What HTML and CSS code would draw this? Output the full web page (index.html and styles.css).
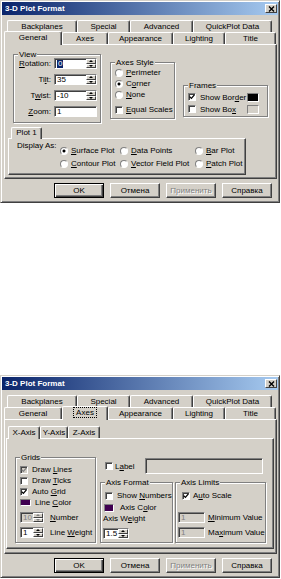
FILE: index.html
```html
<!DOCTYPE html>
<html lang="ru">
<head>
  <meta charset="UTF-8">
  <title>3-D Plot Format</title>
  <link rel="stylesheet" href="styles.css">
</head>
<body>
  <!-- dialog 1: General tab -->
  <div class="dlg">
    <div class="titlebar">
      <span class="title">3-D Plot Format</span>
      <span class="close"><svg width="7" height="6" viewBox="0 0 7 6"><path d="M1 0.5l5 5M6 0.5l-5 5" stroke="#000" stroke-width="1.4"/></svg></span>
    </div>
    <div class="tabs">
      <div class="tabrow back">
        <div class="tab t-back">Backplanes</div>
        <div class="tab t-special">Special</div>
        <div class="tab t-adv">Advanced</div>
        <div class="tab t-quick">QuickPlot Data</div>
      </div>
      <div class="tabrow front">
        <div class="tab t-general sel">General</div>
        <div class="tab t-axes">Axes</div>
        <div class="tab t-appear">Appearance</div>
        <div class="tab t-light">Lighting</div>
        <div class="tab t-title">Title</div>
      </div>
    </div>
    <div class="panel">
      <div class="gen-top">
        <div class="group g-view">
          <div class="glabel">View</div>
          <div class="view-grid">
            <span class="lbl"><u>R</u>otation:</span>
            <div class="field"><span class="selval">0</span><span class="spin"><i class="up"></i><i class="dn"></i></span></div>
            <span class="lbl">Ti<u>l</u>t:</span>
            <div class="field"><span class="val">35</span><span class="spin"><i class="up"></i><i class="dn"></i></span></div>
            <span class="lbl">T<u>w</u>ist:</span>
            <div class="field"><span class="val">-10</span><span class="spin"><i class="up"></i><i class="dn"></i></span></div>
            <span class="lbl"><u>Z</u>oom:</span>
            <div class="field"><span class="val">1</span></div>
          </div>
        </div>
        <div class="group g-axstyle">
          <div class="glabel">Axes Style</div>
          <div class="opts">
            <div class="row"><span class="rb"></span><span class="txt r-txt"><u>P</u>erimeter</span></div>
            <div class="row"><span class="rb on"></span><span class="txt r-txt">C<u>o</u>rner</span></div>
            <div class="row"><span class="rb"></span><span class="txt r-txt"><u>N</u>one</span></div>
            <div class="row eq"><span class="cb"></span><span class="txt r-txt"><u>E</u>qual Scales</span></div>
          </div>
        </div>
        <div class="group g-frames">
          <div class="glabel">Frames</div>
          <div class="frow">
            <span class="cb"><svg width="6" height="6" viewBox="0 0 6 6"><path d="M0.6 2.6l1.8 1.8 3-3.6" stroke="#000" stroke-width="1.3" fill="none"/></svg></span>
            <span class="txt">Show Bor<u>d</u>er</span>
            <span class="sw black"></span>
          </div>
          <div class="frow">
            <span class="cb"></span>
            <span class="txt">Show Bo<u>x</u></span>
            <span class="sw grey"></span>
          </div>
        </div>
      </div>
      <div class="tabrow plot-tabs">
        <div class="tab t-plot1 sel">Plot 1</div>
      </div>
      <div class="subpanel plot-panel">
        <span class="disp-lbl">Display As:</span>
        <div class="disp-grid">
          <div class="row"><span class="rb on"></span><span class="txt r-txt"><u>S</u>urface Plot</span></div>
          <div class="row"><span class="rb"></span><span class="txt r-txt"><u>D</u>ata Points</span></div>
          <div class="row"><span class="rb"></span><span class="txt r-txt"><u>B</u>ar Plot</span></div>
          <div class="row"><span class="rb"></span><span class="txt r-txt"><u>C</u>ontour Plot</span></div>
          <div class="row"><span class="rb"></span><span class="txt r-txt"><u>V</u>ector Field Plot</span></div>
          <div class="row"><span class="rb"></span><span class="txt r-txt"><u>P</u>atch Plot</span></div>
        </div>
      </div>
    </div>
    <div class="buttons">
      <div class="btn def">OK</div>
      <div class="btn">Отмена</div>
      <div class="btn dis">Применить</div>
      <div class="btn">Справка</div>
    </div>
  </div>

  <!-- dialog 2: Axes tab -->
  <div class="dlg">
    <div class="titlebar">
      <span class="title">3-D Plot Format</span>
      <span class="close"><svg width="7" height="6" viewBox="0 0 7 6"><path d="M1 0.5l5 5M6 0.5l-5 5" stroke="#000" stroke-width="1.4"/></svg></span>
    </div>
    <div class="tabs">
      <div class="tabrow back">
        <div class="tab t-back">Backplanes</div>
        <div class="tab t-special">Special</div>
        <div class="tab t-adv">Advanced</div>
        <div class="tab t-quick">QuickPlot Data</div>
      </div>
      <div class="tabrow front">
        <div class="tab t-general">General</div>
        <div class="tab t-axes sel"><span class="focus">Axes</span></div>
        <div class="tab t-appear">Appearance</div>
        <div class="tab t-light">Lighting</div>
        <div class="tab t-title">Title</div>
      </div>
    </div>
    <div class="panel">
      <div class="tabrow axis-tabs">
        <div class="tab t-x sel">X-Axis</div>
        <div class="tab t-y">Y-Axis</div>
        <div class="tab t-z">Z-Axis</div>
      </div>
      <div class="subpanel axis-panel">
        <div class="group g-grids">
          <div class="glabel">Grids</div>
          <div class="grid-rows">
            <div class="row"><span class="cb dis"><svg width="6" height="6" viewBox="0 0 6 6"><path d="M0.6 2.6l1.8 1.8 3-3.6" stroke="#808080" stroke-width="1.3" fill="none"/></svg></span><span class="txt c-txt">Draw <u>L</u>ines</span></div>
            <div class="row"><span class="cb"></span><span class="txt c-txt">Draw <u>T</u>icks</span></div>
            <div class="row"><span class="cb"><svg width="6" height="6" viewBox="0 0 6 6"><path d="M0.6 2.6l1.8 1.8 3-3.6" stroke="#000" stroke-width="1.3" fill="none"/></svg></span><span class="txt c-txt">Auto <u>G</u>rid</span></div>
            <div class="row"><span class="sw purple lc"></span><span class="txt">Line <u>C</u>olor</span></div>
            <div class="row inrow"><div class="field dis w-num"><span class="val">10</span><span class="spin"><i class="up"></i><i class="dn"></i></span></div><span class="txt f-txt"><u>N</u>umber</span></div>
            <div class="row inrow"><div class="field w-num"><span class="val">1</span><span class="spin"><i class="up"></i><i class="dn"></i></span></div><span class="txt f-txt">Line <u>W</u>eight</span></div>
          </div>
        </div>
        <div class="axis-right">
          <div class="lblrow">
            <span class="cb"></span>
            <span class="txt lbl-txt">L<u>a</u>bel</span>
            <span class="textbox"></span>
          </div>
          <div class="axis-groups">
            <div class="group g-axfmt">
              <div class="glabel">Axis Format</div>
              <div class="row fmt-show"><span class="cb"></span><span class="txt c-txt">Show <u>N</u>umbers</span></div>
              <div class="row fmt-color"><span class="sw purple ac"></span><span class="txt">Axis C<u>o</u>lor</span></div>
              <div class="row fmt-wlbl"><span class="txt">Axis W<u>e</u>ight</span></div>
              <div class="row fmt-win"><div class="field w-wt"><span class="val">1.5</span><span class="spin"><i class="up"></i><i class="dn"></i></span></div></div>
            </div>
            <div class="group g-axlim">
              <div class="glabel">Axis Limits</div>
              <div class="row lim-auto"><span class="cb"><svg width="6" height="6" viewBox="0 0 6 6"><path d="M0.6 2.6l1.8 1.8 3-3.6" stroke="#000" stroke-width="1.3" fill="none"/></svg></span><span class="txt">A<u>u</u>to Scale</span></div>
              <div class="row lim-min"><div class="field dis w-lim"><span class="val">1</span></div><span class="txt l-txt"><u>M</u>inimum Value</span></div>
              <div class="row lim-max"><div class="field dis w-lim"><span class="val">1</span></div><span class="txt l-txt">Ma<u>x</u>imum Value</span></div>
            </div>
          </div>
        </div>
      </div>
    </div>
    <div class="buttons">
      <div class="btn def">OK</div>
      <div class="btn">Отмена</div>
      <div class="btn dis">Применить</div>
      <div class="btn">Справка</div>
    </div>
  </div>
</body>
</html>
```

FILE: styles.css
```css
body {
  margin: 0;
  background: #fff;
  font-family: "Liberation Sans", Arial, sans-serif;
  font-size: 8px;
  color: #000;
}

u {
  text-decoration: underline;
  text-underline-offset: 1px;
}

/* window frame */
.dlg {
  width: 280px;
  height: 203px;
  box-sizing: border-box;
  padding: 1px;
  background: #d4d0c8;
  border: 1px solid;
  border-color: #d4d0c8 #404040 #404040 #d4d0c8;
  box-shadow: inset 1px 1px #fff, inset -1px -1px #808080;
}

.dlg + .dlg {
  margin-top: 172px;
}

.titlebar {
  height: 13px;
  display: flex;
  align-items: center;
  justify-content: space-between;
  padding: 0 1px 0 3px;
  background: linear-gradient(to right, #0a246a, #a6caf0);
}

.title {
  color: #fff;
  font-weight: bold;
  font-size: 8px;
}

.close {
  width: 12px;
  height: 9px;
  box-sizing: border-box;
  display: flex;
  align-items: center;
  justify-content: center;
  background: #d4d0c8;
  border: 1px solid;
  border-color: #fff #404040 #404040 #fff;
}

/* tabs */
.tabs {
  margin-top: 5px;
}

.tabrow {
  display: flex;
  align-items: flex-end;
  height: 12px;
}

.tabrow.back { margin-left: 5px; }
.tabrow.front { margin-left: 2px; }

.tab {
  height: 12px;
  box-sizing: border-box;
  line-height: 11px;
  text-align: center;
  border-top: 1px solid #fff;
  border-left: 1px solid #fff;
  border-right: 1px solid #404040;
  box-shadow: inset -1px 0 #808080;
  border-radius: 2px 2px 0 0;
  background: #d4d0c8;
}

.tab.sel {
  height: 14px;
  margin-bottom: -1px;
  position: relative;
  z-index: 1;
  line-height: 12px;
}

.focus {
  outline: 1px dotted #000;
  padding: 0 2px;
}

.t-back { width: 70px; }
.t-special { width: 53px; }
.t-adv { width: 63px; }
.t-quick { width: 79px; }
.t-general { width: 58px; }
.t-axes { width: 46px; }
.t-appear { width: 65px; }
.t-light { width: 52px; }
.t-title { width: 51px; }
.t-plot1 { width: 31px; }
.t-x { width: 32px; }
.t-y { width: 28px; }
.t-z { width: 32px; }

.panel {
  margin-left: 2px;
  width: 273px;
  height: 135px;
  box-sizing: border-box;
  border: 1px solid;
  border-color: #fff #404040 #404040 #fff;
  box-shadow: inset -1px -1px #808080;
}

.subpanel {
  box-sizing: border-box;
  border: 1px solid;
  border-color: #fff #404040 #404040 #fff;
  box-shadow: inset -1px -1px #808080;
}

/* group boxes */
.group {
  box-sizing: border-box;
  border: 1px solid #808080;
  box-shadow: inset 1px 1px #fff, 1px 1px #fff;
}

.glabel {
  width: fit-content;
  height: 9px;
  line-height: 9px;
  margin: -5px 0 0 4px;
  padding: 0 1px;
  background: #d4d0c8;
}

/* controls */
.row {
  display: flex;
  align-items: center;
  height: 11px;
}

.txt {
  white-space: nowrap;
}

.cb {
  width: 8px;
  height: 8px;
  flex: none;
  box-sizing: border-box;
  display: flex;
  align-items: center;
  justify-content: center;
  background: #fff;
  border: 1px solid;
  border-color: #808080 #fff #fff #808080;
  box-shadow: inset 1px 1px #404040;
}

.cb.dis {
  background: #d4d0c8;
}

.rb {
  width: 8px;
  height: 8px;
  flex: none;
  box-sizing: border-box;
  border-radius: 50%;
  background: #fff;
  border: 1px solid;
  border-color: #808080 #fff #fff #808080;
}

.rb.on {
  background: radial-gradient(circle, #000 1.2px, #fff 1.8px);
}

.r-txt { margin-left: 3px; }
.c-txt { margin-left: 4px; }

.sw {
  flex: none;
  box-sizing: border-box;
  border: 1px solid;
  border-color: #808080 #fff #fff #808080;
}

.sw.black { background: #000; }
.sw.grey { background: #d4d0c8; }
.sw.purple { background: #400050; }

.field {
  height: 11px;
  box-sizing: border-box;
  display: flex;
  align-items: center;
  background: #fff;
  border: 1px solid;
  border-color: #808080 #fff #fff #808080;
  box-shadow: inset 1px 1px #404040;
}

.field.dis {
  background: #d4d0c8;
  color: #808080;
}

.val {
  padding-left: 2px;
  line-height: 9px;
}

.selval {
  margin-left: 2px;
  padding: 0 1px;
  line-height: 8px;
  background: #0a246a;
  color: #fff;
}

.spin {
  margin-left: auto;
  width: 10px;
  height: 9px;
  display: flex;
  flex-direction: column;
}

.spin i {
  flex: 1;
  box-sizing: border-box;
  display: flex;
  align-items: center;
  justify-content: center;
  background: #d4d0c8;
  border: 1px solid;
  border-color: #fff #404040 #404040 #fff;
}

.spin .up::after {
  content: "";
  border-left: 2px solid transparent;
  border-right: 2px solid transparent;
  border-bottom: 2px solid #000;
}

.spin .dn::after {
  content: "";
  border-left: 2px solid transparent;
  border-right: 2px solid transparent;
  border-top: 2px solid #000;
}

.field.dis .spin .up::after { border-bottom-color: #808080; }
.field.dis .spin .dn::after { border-top-color: #808080; }

/* general tab */
.gen-top {
  display: flex;
  align-items: flex-start;
  height: 78px;
}

.g-view {
  margin: 9px 0 0 8px;
  width: 88px;
  height: 69px;
}

.view-grid {
  display: grid;
  grid-template-columns: 37px 43px;
  grid-auto-rows: 11px;
  column-gap: 3px;
  row-gap: 5px;
  margin-top: -1px;
}

.lbl {
  text-align: right;
  line-height: 11px;
}

.g-axstyle {
  margin: 17px 0 0 9px;
  width: 65px;
  height: 57px;
}

.opts {
  padding-left: 4px;
}

.row.eq {
  margin-top: 4px;
}

.g-frames {
  margin: 40px 0 0 8px;
  width: 85px;
  height: 32px;
}

.frow {
  display: flex;
  align-items: center;
  height: 10px;
  margin-top: 2px;
  padding-left: 4px;
}

.frow .txt {
  margin-left: 4px;
}

.frow .sw {
  margin: 0 8px 0 auto;
  width: 12px;
  height: 9px;
}

.plot-tabs {
  margin: 4px 0 0 6px;
  height: 11px;
}

.plot-tabs .tab.sel {
  height: 12px;
  line-height: 10px;
}

.plot-panel {
  margin-left: 3px;
  width: 238px;
  height: 37px;
  display: flex;
  align-items: flex-start;
  padding: 2px 0 0 8px;
}

.disp-lbl {
  width: 43px;
  line-height: 9px;
  flex: none;
}

.disp-grid {
  margin-top: 4px;
  display: grid;
  grid-template-columns: 60px 75px auto;
  grid-auto-rows: 11px;
  row-gap: 2px;
}

/* axes tab */
.axis-tabs {
  margin: 6px 0 0 3px;
}

.axis-tabs .tab.sel {
  height: 13px;
}

.axis-panel {
  margin-left: 1px;
  width: 268px;
  height: 111px;
  display: flex;
  align-items: flex-start;
}

.g-grids {
  margin: 18px 0 0 8px;
  width: 81px;
  height: 86px;
}

.grid-rows {
  margin-top: 2px;
  padding-left: 4px;
}

.sw.lc {
  width: 11px;
  height: 7px;
  margin-right: 4px;
}

.row.inrow {
  margin-top: 4px;
}

.w-num { width: 24px; }
.f-txt { margin-left: 6px; }

.axis-right {
  margin: 19px 0 0 4px;
}

.lblrow {
  display: flex;
  align-items: center;
  height: 16px;
}

.lblrow .cb {
  margin-left: 5px;
}

.lbl-txt {
  margin-left: 2px;
  width: 30px;
}

.textbox {
  width: 118px;
  height: 16px;
  box-sizing: border-box;
  background: #d4d0c8;
  border: 1px solid;
  border-color: #808080 #fff #fff #808080;
  box-shadow: inset 1px 1px #404040;
}

.axis-groups {
  display: flex;
  margin-top: 8px;
}

.g-axfmt {
  width: 73px;
  height: 61px;
}

.g-axlim {
  margin-left: 2px;
  width: 91px;
  height: 61px;
}

.fmt-show {
  margin-top: 3px;
  padding-left: 4px;
}

.fmt-color {
  margin-top: 1px;
  padding-left: 3px;
}

.sw.ac {
  width: 10px;
  height: 8px;
  margin-right: 6px;
}

.fmt-wlbl {
  padding-left: 2px;
}

.fmt-win {
  margin-top: 4px;
  padding-left: 2px;
}

.w-wt { width: 26px; }

.lim-auto {
  margin-top: 3px;
  padding-left: 6px;
}

.lim-auto .txt {
  margin-left: 3px;
}

.lim-min {
  margin-top: 11px;
  padding-left: 2px;
}

.lim-max {
  margin-top: 4px;
  padding-left: 2px;
}

.w-lim { width: 27px; }
.l-txt { margin-left: 3px; }

/* buttons */
.buttons {
  display: flex;
  justify-content: flex-end;
  gap: 6px;
  margin-top: 4px;
  padding-right: 6px;
}

.btn {
  width: 50px;
  height: 15px;
  box-sizing: border-box;
  line-height: 13px;
  text-align: center;
  border: 1px solid;
  border-color: #fff #404040 #404040 #fff;
  box-shadow: inset -1px -1px #808080;
}

.btn.def {
  border-color: #000;
  box-shadow: inset 1px 1px #fff, inset -1px -1px #404040, inset -2px -2px #808080;
}

.btn.dis {
  color: #808080;
  text-shadow: 1px 1px #fff;
}
```
